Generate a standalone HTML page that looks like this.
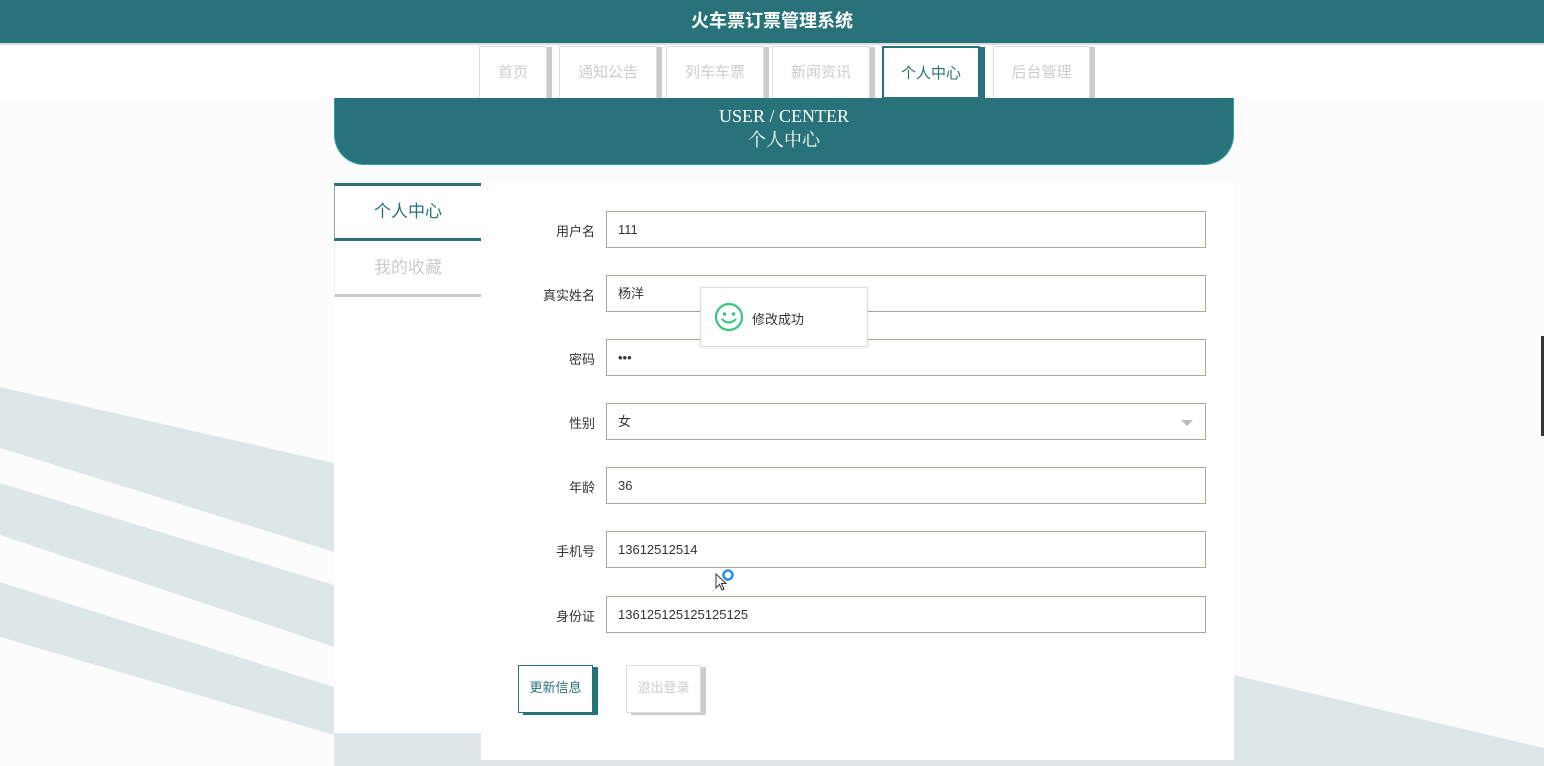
<!DOCTYPE html>
<html><head><meta charset="utf-8"><style>
*{box-sizing:border-box;margin:0;padding:0}
body{width:1544px;height:766px;overflow:hidden;background:#fcfcfd;font-family:"Liberation Sans","Noto Sans CJK SC",sans-serif;position:relative}
.abs{position:absolute}
.hdr{left:0;top:0;width:1544px;height:43px;background:#287379;color:#fff;font-size:18px;font-weight:bold;text-align:center;line-height:42px}
.navrow{left:0;top:43px;width:1544px;height:58px;background:#fff;border-top:2px solid #ddd}
.nb{top:46px;height:53px;background:#fff;border:1px solid #ddd;box-shadow:5px 1px 0 #ccc;color:#ccc;font-size:15px;text-align:center;line-height:51px}
.nb.on{border:2px solid #287379;box-shadow:5px 1px 0 #287379;color:#287379}
.banner{left:334px;top:98px;width:900px;height:67px;background:#287379;border-radius:0 0 30px 30px;border:1px solid #2aa5a5;border-top:none;color:#fff;text-align:center;font-family:"Liberation Serif","Noto Serif CJK SC",serif;font-size:18px;line-height:24px;padding-top:6px}
.lp{left:334px;top:183px;width:147px;height:550px;background:#fff}
.tab{left:334px;width:147px;text-align:center;font-size:17px}
.card{left:481px;top:183px;width:753px;height:577px;background:#fff}
.lbl{left:500px;width:95px;text-align:right;font-size:13px;color:#333}
.inp{left:606px;width:600px;height:37px;border:1px solid #aaa897;background:#fff;font-size:13px;color:#333;padding-left:11px;line-height:35px}
.btn{top:665px;height:48px;text-align:center;font-size:13px;line-height:44px}
</style></head><body>
<svg class="abs" style="left:0;top:0" width="1544" height="766">
<g fill="#dde7e8">
<polygon points="0,387 334,463 334,552 0,448"/>
<polygon points="0,483 334,585 334,647 0,535"/>
<polygon points="0,582 334,687 500,740 500,766 440,766 0,637"/>
<rect x="334" y="733" width="900" height="33"/>
<polygon points="1234,675 1544,748 1544,766 1234,766"/>
</g></svg>
<div class="abs hdr">火车票订票管理系统</div>
<div class="abs navrow"></div>
<div class="abs nb" style="left:479px;width:68px">首页</div>
<div class="abs nb" style="left:559px;width:98px">通知公告</div>
<div class="abs nb" style="left:666px;width:98px">列车车票</div>
<div class="abs nb" style="left:772px;width:98px">新闻资讯</div>
<div class="abs nb on" style="left:882px;width:98px">个人中心</div>
<div class="abs nb" style="left:993px;width:97px">后台管理</div>
<div class="abs banner">USER / CENTER<br>个人中心</div>
<div class="abs lp"></div>
<div class="abs tab" style="top:183px;height:58px;border-top:3px solid #287379;border-bottom:3px solid #287379;border-left:1px solid #8ab;color:#287379;line-height:52px">个人中心</div>
<div class="abs tab" style="top:243px;height:54px;border-bottom:3px solid #ccc;border-left:1px solid #eee;color:#ccc;line-height:50px">我的收藏</div>
<div class="abs card"></div>
<div class="abs lbl" style="top:221px">用户名</div><div class="abs inp" style="top:211px">111</div>
<div class="abs lbl" style="top:285px">真实姓名</div><div class="abs inp" style="top:275px">杨洋</div>
<div class="abs lbl" style="top:349px">密码</div><div class="abs inp" style="top:339px">•••</div>
<div class="abs lbl" style="top:413px">性别</div><div class="abs inp" style="top:403px">女<span class="abs" style="right:12px;top:16px;width:0;height:0;border-left:6px solid transparent;border-right:6px solid transparent;border-top:6px solid #bbb"></span></div>
<div class="abs lbl" style="top:477px">年龄</div><div class="abs inp" style="top:467px">36</div>
<div class="abs lbl" style="top:541px">手机号</div><div class="abs inp" style="top:531px">13612512514</div>
<div class="abs lbl" style="top:606px">身份证</div><div class="abs inp" style="top:596px">136125125125125125</div>
<div class="abs btn" style="left:518px;width:75px;background:#fff;border:1px solid #287379;box-shadow:5px 2px 0 #287379;color:#287379">更新信息</div>
<div class="abs btn" style="left:626px;width:75px;background:#fff;border:1px solid #ddd;box-shadow:5px 2px 0 #ccc;color:#ccc">退出登录</div>
<div class="abs" style="left:700px;top:287px;width:168px;height:60px;background:#fff;border:1px solid #ddd;box-shadow:0 1px 3px rgba(0,0,0,.08)">
<svg class="abs" style="left:13px;top:14px" width="30" height="30" viewBox="0 0 30 30"><circle cx="15" cy="15" r="13" fill="none" stroke="#3cc480" stroke-width="2.2"/><circle cx="10.5" cy="12" r="1.8" fill="#3cc480"/><circle cx="19.5" cy="12" r="1.8" fill="#3cc480"/><path d="M8.5 17.5 Q15 23.5 21.5 17.5" fill="none" stroke="#3cc480" stroke-width="2.2" stroke-linecap="round"/></svg>
<div class="abs" style="left:51px;top:21px;font-size:13px;color:#333">修改成功</div></div>
<svg class="abs" style="left:714px;top:568px" width="24" height="26"><path d="M2 6 L2 20 L5.5 16.5 L8 22 L10 21 L7.5 15.5 L12 15.5 Z" fill="#fff" stroke="#333" stroke-width="1"/><circle cx="14" cy="7" r="4.5" fill="none" stroke="#2a8ee8" stroke-width="2.5"/></svg>
<div class="abs" style="left:1541px;top:336px;width:3px;height:100px;background:#333"></div>
</body></html>
